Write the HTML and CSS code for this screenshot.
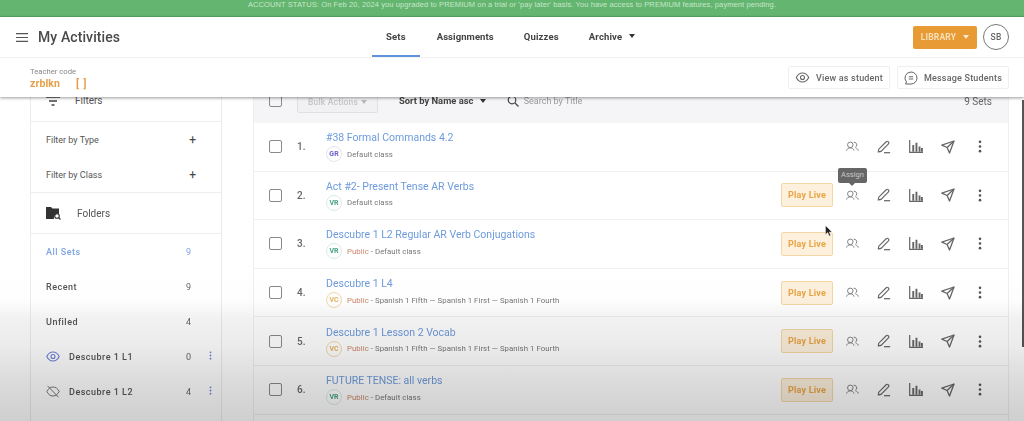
FILE: index.html
```html
<!DOCTYPE html>
<html lang="en">
<head>
<meta charset="utf-8">
<title>My Activities</title>
<link rel="stylesheet" href="styles.css">
</head>
<body>
<svg class="defs" width="0" height="0" aria-hidden="true">
  <symbol id="i-people" viewBox="0 0 14 12"><g fill="none" stroke="currentColor" stroke-width="1"><circle cx="4.6" cy="4.2" r="3"/><path d="M.6 10.5c.3-2 1.800-3 4-3s3.700 1 4 3"/><path d="M8.300 1.300a3 3 0 0 1 1.600 5.700M10.500 7.700c1.500.4 2.500 1.300 2.900 2.800"/></g></symbol>
  <symbol id="i-pencil" viewBox="0 0 16 16"><g fill="none" stroke="currentColor" stroke-width="1.300"><path d="M1.500 13.500 2 10.500 10.500 2c.7-.7 1.700-.7 2.300 0l.3.300c.6.600.6 1.600 0 2.200L4.600 13z"/><path d="M1.500 13.500 4.600 13"/></g><path d="M8 14.500h7" stroke="currentColor" stroke-width="1.400"/></symbol>
  <symbol id="i-chart" viewBox="0 0 14 13"><path d="M.7 0v12.300H14" fill="none" stroke="currentColor" stroke-width="1.200"/><path d="M3.300 5h1.900v6.800H3.300zM6.500 2.800h1.900v9H6.500zM9.600 6.500h1.900v5.300H9.600zM12 8h1.900v3.800H12z" fill="currentColor"/></symbol>
  <symbol id="i-send" viewBox="0 0 14 14"><g fill="none" stroke="currentColor" stroke-width="1.300" stroke-linejoin="round"><path d="M13 1 .8 5.200l5.300 2.300 2.400 5.500z"/><path d="M13 1 6.100 7.500"/></g></symbol>
  <symbol id="i-dots" viewBox="0 0 4 14"><circle cx="2" cy="2" r="1.400" fill="currentColor"/><circle cx="2" cy="7" r="1.400" fill="currentColor"/><circle cx="2" cy="12" r="1.400" fill="currentColor"/></symbol>
  <symbol id="i-eye" viewBox="0 0 14 11"><path d="M.8 5.500C2.200 2.600 4.400 1 7 1s4.800 1.600 6.200 4.500C11.800 8.400 9.600 10 7 10S2.200 8.400.8 5.500z" fill="none" stroke="currentColor" stroke-width="1.100"/><circle cx="7" cy="5.500" r="2" fill="none" stroke="currentColor" stroke-width="1.100"/></symbol>
</svg>

<div class="page">
  <div class="banner">ACCOUNT STATUS: On Feb 20, 2024 you upgraded to PREMIUM on a trial or 'pay later' basis. You have access to PREMIUM features, payment pending.</div>

  <header class="top">
    <div class="nav">
      <div class="brand">
        <svg class="burger" width="12" height="9" viewBox="0 0 12 9"><path d="M0 .7h12M0 4.500h12M0 8.300h12" stroke="#555" stroke-width="1.200"/></svg>
        <span class="brand-title">My Activities</span>
      </div>
      <nav class="tabs">
        <a class="tab tab-active">Sets</a>
        <a class="tab tab-assign">Assignments</a>
        <a class="tab">Quizzes</a>
        <a class="tab">Archive <span class="caret caret-dark caret-gap"></span></a>
      </nav>
      <div class="nav-right">
        <button class="library">LIBRARY <span class="caret caret-white"></span></button>
        <div class="avatar">SB</div>
      </div>
    </div>
    <div class="sub">
      <div class="code">
        <div class="code-label">Teacher code</div>
        <div class="code-value"><span>zrblkn</span><span class="code-bracket">[ ]</span></div>
      </div>
      <div class="sub-actions">
        <button class="ghost"><svg class="ghost-eye" width="15" height="11"><use href="#i-eye"/></svg>View as student</button>
        <button class="ghost ghost-msg">
          <svg width="14" height="14" viewBox="0 0 14 14"><path d="M7 1a6 6 0 0 1 0 12H1.500l1-2A6 6 0 0 1 7 1z" fill="none" stroke="#666" stroke-width="1"/><path d="M4.800 5.800h4.400M4.800 8h4.400" stroke="#666"/></svg>
          Message Students</button>
      </div>
    </div>
  </header>

  <div class="body">
    <aside class="side">
      <div class="side-head side-head-filters">
        <svg width="14" height="10" viewBox="0 0 14 10"><path d="M0 1h14M3 5h8M5.500 9h3" stroke="#444" stroke-width="1.400"/></svg>
        <span>Filters</span>
      </div>
      <div class="filters">
        <div class="filter"><span>Filter by Type</span><span class="plus">+</span></div>
        <div class="filter"><span>Filter by Class</span><span class="plus">+</span></div>
      </div>
      <div class="side-head side-head-folders">
        <svg width="15" height="14" viewBox="0 0 15 14"><path d="M0 1h5l1.500 1.500H13V8a4 4 0 0 0-5 5H0z" fill="#333"/><circle cx="11" cy="10" r="2.300" fill="none" stroke="#333" stroke-width="1.100"/><path d="m12.700 11.700 1.800 1.800" stroke="#333" stroke-width="1.100"/></svg>
        <span>Folders</span>
      </div>
      <div class="folder folder-active"><span class="folder-name">All Sets</span><span class="count">9</span></div>
      <div class="folder"><span class="folder-name">Recent</span><span class="count">9</span></div>
      <div class="folder"><span class="folder-name">Unfiled</span><span class="count">4</span></div>
      <div class="folder">
        <svg class="folder-eye eye-on" width="14" height="11"><use href="#i-eye"/></svg>
        <span class="folder-name">Descubre 1 L1</span><span class="count">0</span>
        <svg class="kebab" width="3" height="9"><use href="#i-dots"/></svg>
      </div>
      <div class="folder">
        <svg class="folder-eye eye-off" width="14" height="13" viewBox="0 0 14 13"><path d="M.8 6.500C2.200 3.600 4.400 2 7 2s4.800 1.600 6.200 4.500C11.800 9.400 9.600 11 7 11S2.200 9.400.8 6.500z" fill="none" stroke="currentColor"/><path d="m1.500 .8 11 11.400" stroke="currentColor"/></svg>
        <span class="folder-name">Descubre 1 L2</span><span class="count">4</span>
        <svg class="kebab" width="3" height="9"><use href="#i-dots"/></svg>
      </div>
    </aside>

    <main class="list">
      <div class="toolbar">
        <span class="check"></span>
        <button class="bulk">Bulk Actions <span class="caret caret-grey"></span></button>
        <span class="sort">Sort by Name asc <span class="caret caret-dark"></span></span>
        <svg class="search-icon" width="12" height="12" viewBox="0 0 12 12"><circle cx="5" cy="5" r="3.800" fill="none" stroke="#444" stroke-width="1.200"/><path d="m8 8 3.500 3.500" stroke="#444" stroke-width="1.300"/></svg>
        <span class="search">Search by Title</span>
        <span class="total">9 Sets</span>
      </div>

      <div class="row">
        <span class="check"></span><span class="num">1.</span>
        <div class="info">
          <a class="title">#38 Formal Commands 4.2</a>
          <div class="meta"><span class="badge badge-gr">GR</span><span>Default class</span></div>
        </div>
        <div class="actions">
          <svg class="a a-people"><use href="#i-people"/></svg><svg class="a a-pencil"><use href="#i-pencil"/></svg><svg class="a a-chart"><use href="#i-chart"/></svg><svg class="a a-send"><use href="#i-send"/></svg><svg class="a a-dots"><use href="#i-dots"/></svg>
        </div>
      </div>

      <div class="row">
        <span class="check"></span><span class="num">2.</span>
        <div class="info">
          <a class="title">Act #2- Present Tense AR Verbs</a>
          <div class="meta"><span class="badge badge-vr">VR</span><span>Default class</span></div>
        </div>
        <button class="play">Play Live</button>
        <div class="actions">
          <div class="tooltip">Assign</div>
          <svg class="a a-people"><use href="#i-people"/></svg><svg class="a a-pencil"><use href="#i-pencil"/></svg><svg class="a a-chart"><use href="#i-chart"/></svg><svg class="a a-send"><use href="#i-send"/></svg><svg class="a a-dots"><use href="#i-dots"/></svg>
        </div>
      </div>

      <div class="row">
        <span class="check"></span><span class="num">3.</span>
        <div class="info">
          <a class="title">Descubre 1 L2 Regular AR Verb Conjugations</a>
          <div class="meta"><span class="badge badge-vr">VR</span><span class="public">Public</span><span>- Default class</span></div>
        </div>
        <button class="play">Play Live</button>
        <div class="actions">
          <svg class="a a-people"><use href="#i-people"/></svg><svg class="a a-pencil"><use href="#i-pencil"/></svg><svg class="a a-chart"><use href="#i-chart"/></svg><svg class="a a-send"><use href="#i-send"/></svg><svg class="a a-dots"><use href="#i-dots"/></svg>
        </div>
      </div>

      <div class="row">
        <span class="check"></span><span class="num">4.</span>
        <div class="info">
          <a class="title">Descubre 1 L4</a>
          <div class="meta"><span class="badge badge-vc">VC</span><span class="public">Public</span><span>- Spanish 1 Fifth — Spanish 1 First — Spanish 1 Fourth</span></div>
        </div>
        <button class="play">Play Live</button>
        <div class="actions">
          <svg class="a a-people"><use href="#i-people"/></svg><svg class="a a-pencil"><use href="#i-pencil"/></svg><svg class="a a-chart"><use href="#i-chart"/></svg><svg class="a a-send"><use href="#i-send"/></svg><svg class="a a-dots"><use href="#i-dots"/></svg>
        </div>
      </div>

      <div class="row">
        <span class="check"></span><span class="num">5.</span>
        <div class="info">
          <a class="title">Descubre 1 Lesson 2 Vocab</a>
          <div class="meta"><span class="badge badge-vc">VC</span><span class="public">Public</span><span>- Spanish 1 Fifth — Spanish 1 First — Spanish 1 Fourth</span></div>
        </div>
        <button class="play">Play Live</button>
        <div class="actions">
          <svg class="a a-people"><use href="#i-people"/></svg><svg class="a a-pencil"><use href="#i-pencil"/></svg><svg class="a a-chart"><use href="#i-chart"/></svg><svg class="a a-send"><use href="#i-send"/></svg><svg class="a a-dots"><use href="#i-dots"/></svg>
        </div>
      </div>

      <div class="row">
        <span class="check"></span><span class="num">6.</span>
        <div class="info">
          <a class="title">FUTURE TENSE: all verbs</a>
          <div class="meta"><span class="badge badge-vr">VR</span><span class="public">Public</span><span>- Default class</span></div>
        </div>
        <button class="play">Play Live</button>
        <div class="actions">
          <svg class="a a-people"><use href="#i-people"/></svg><svg class="a a-pencil"><use href="#i-pencil"/></svg><svg class="a a-chart"><use href="#i-chart"/></svg><svg class="a a-send"><use href="#i-send"/></svg><svg class="a a-dots"><use href="#i-dots"/></svg>
        </div>
      </div>
    </main>
  </div>

  <div class="scrollbar"></div>
  <svg class="cursor" width="8" height="12" viewBox="0 0 8 12"><path d="M.5.500v9l2.200-2 1.500 3.500 1.500-.6L4.200 7H7z" fill="#222" stroke="#fff" stroke-width=".4"/></svg>
  <div class="fade"></div>
</div>
</body>
</html>
```

FILE: styles.css
```css
* { box-sizing: border-box; }
html, body { margin: 0; padding: 0; height: 100%; background: #fff; overflow: hidden; }
body { font-family: Roboto, "Liberation Sans", sans-serif; color: #444; }
.defs { position: absolute; }
button { font-family: inherit; }

.page { position: relative; width: 1024px; height: 421px; overflow: hidden; filter: blur(.45px); display: flex; flex-direction: column; }

.banner { height: 17px; flex: none; background: #63b56f; border-bottom: 1px solid #55a862; color: #c9e6cb; font-family: "Liberation Sans", sans-serif; font-size: 7.5px; line-height: 10px; text-align: center; letter-spacing: .1px; }

.top { flex: none; position: relative; z-index: 3; background: #fff; box-shadow: 0 1px 3px rgba(0,0,0,.4); }
.nav { height: 41px; display: flex; align-items: center; border-bottom: 1px solid #f1f1f1; padding-left: 16px; }
.brand { flex: 0 0 356px; display: flex; align-items: center; gap: 10px; }
.brand-title { font-size: 14px; font-weight: 500; color: #4a4a4a; letter-spacing: .1px; }
.tabs { display: flex; align-self: stretch; gap: 2px; }
.tab { display: flex; align-items: center; padding: 0 14px; font-size: 9.500px; font-weight: 700; color: #444; letter-spacing: .15px; border-bottom: 2px solid transparent; white-space: pre; }
.tab-assign { padding: 0 14px 0 15px; letter-spacing: .08px; }
.tab-active { border-bottom-color: #5f93dc; }
.nav-right { margin-left: auto; display: flex; align-items: center; gap: 6px; padding-right: 15px; }
.library { width: 64px; height: 23px; border: 0; border-radius: 2px; background: #e89b34; color: #f8dfb8; font-size: 8.500px; font-weight: 700; letter-spacing: .2px; display: flex; align-items: center; justify-content: center; gap: 7px; padding: 0; }
.avatar { width: 26px; height: 26px; border-radius: 50%; border: 1px solid #777; display: flex; align-items: center; justify-content: center; font-size: 8.500px; font-weight: 500; color: #666; letter-spacing: .3px; }

.caret { display: inline-block; width: 0; height: 0; border-left: 3.500px solid transparent; border-right: 3.500px solid transparent; border-top: 4px solid #333; }
.caret-gap { margin-left: 4px; }
.caret-dark { border-top-color: #333; }
.caret-white { border-top-color: #fbe9cd; }
.caret-grey { border-top-color: #b8b8b8; margin-left: 3px; }

.sub { height: 39px; display: flex; align-items: center; padding: 0 15px 0 30px; justify-content: space-between; }
.code { padding-top: 2px; }
.code-label { font-size: 7.700px; color: #888; line-height: 10px; }
.code-value { font-size: 10.500px; font-weight: 700; color: #e5a04a; line-height: 13px; display: flex; gap: 16px; letter-spacing: .1px; }
.code-bracket { letter-spacing: 1px; }
.sub-actions { display: flex; gap: 7px; }
.ghost { height: 23px; width: 102px; background: #fff; border: 1px solid #efefef; border-radius: 2px; display: flex; align-items: center; justify-content: center; gap: 6px; font-size: 9px; font-weight: 500; color: #666; letter-spacing: .2px; padding: 0; }
.ghost-msg { width: 112px; }
.ghost-eye { color: #666; }

.body { flex: 1; min-height: 0; display: flex; gap: 31px; padding: 0 15px 0 30px; }

.side { flex: 0 0 192px; margin-top: -10px; border-left: 1px solid #ececec; border-right: 1px solid #ececec; background: #fff; }
.side-head { display: flex; align-items: center; padding-left: 15px; font-size: 10px; color: #555; border-bottom: 1px solid #eee; }
.side-head-filters { height: 35px; padding-bottom: 7px; gap: 15px; }
.side-head-folders { height: 41px; gap: 16px; }
.filters { height: 71px; display: flex; flex-direction: column; justify-content: center; border-bottom: 1px solid #eee; padding: 0 25px 0 15px; }
.filter { height: 35px; display: flex; justify-content: space-between; align-items: center; font-size: 9px; color: #555; }
.plus { font-size: 12px; color: #444; }
.folder { height: 35px; display: flex; align-items: center; padding-left: 15px; font-size: 9px; font-weight: 500; letter-spacing: .5px; color: #555; position: relative; }
.folder-name { flex: 1; }
.count { width: 10px; margin-right: 25px; font-weight: 400; color: #666; }
.folder-active, .folder-active .count { color: #7fa5e2; }
.folder-eye { margin-right: 9px; flex: none; }
.eye-on { color: #6f7fd6; }
.eye-off { color: #777; }
.kebab { position: absolute; right: 9px; top: 12px; color: #6f7fd6; }

.list { flex: 1; margin-top: -10px; border-left: 1px solid #efefef; border-right: 1px solid #efefef; min-width: 0; }
.toolbar { height: 36px; background: #f5f5f7; display: flex; align-items: flex-start; padding: 4px 16px 0 15px; font-size: 9.500px; }
.toolbar .check { margin-top: 3px; background: #f5f5f7; }
.bulk { margin-left: 15px; margin-top: -8px; width: 81px; height: 30px; padding: 8px 0 0; background: #f1f1f3; border: 1px solid #e0e0e2; border-radius: 2px; color: #c4c4c6; font-size: 8.500px; font-weight: 500; letter-spacing: .2px; display: flex; align-items: center; justify-content: center; }
.sort { margin-left: 21px; margin-top: 4px; font-size: 9.400px; font-weight: 700; color: #444; white-space: pre; display: flex; align-items: center; gap: 4px; }
.search-icon { margin-left: 21px; margin-top: 4px; }
.search { margin-left: 5px; margin-top: 5px; font-size: 9px; color: #9a9a9a; }
.total { margin-left: auto; margin-top: 5px; font-size: 10px; color: #666; }

.check { width: 13px; height: 13px; flex: none; border: 1.500px solid #8a8a8a; border-radius: 2px; background: #fff; }

.row { height: 48.600px; display: flex; align-items: center; padding: 0 15px; border-bottom: 1px solid #f0f0f0; background: #fff; }
.num { width: 29px; flex: none; padding-left: 15px; font-size: 10px; font-weight: 500; color: #666; box-sizing: content-box; }
.info { flex: 1; min-width: 0; }
.title { display: block; font-size: 10.500px; line-height: 14px; color: #6d9bdc; white-space: nowrap; }
.meta { display: flex; align-items: center; gap: 4px; margin-top: 1px; font-size: 7.800px; color: #777; white-space: nowrap; letter-spacing: .05px; }
.public { color: #c98466; margin-right: -2px; }
.badge { width: 16px; height: 16px; border-radius: 50%; border: 1px solid #e4e4ee; display: flex; align-items: center; justify-content: center; font-size: 7px; font-weight: 700; margin-right: 1px; }
.badge-gr { color: #6a63c9; }
.badge-vr { color: #4aa38a; border-color: #d8ece6; }
.badge-vc { color: #e5b35c; border-color: #f1d9a8; }

.play { width: 52px; height: 24px; flex: none; background: #fdf0dc; border: 1px solid #f5d7a6; border-radius: 2px; color: #e9a545; font-size: 9px; font-weight: 700; letter-spacing: .2px; padding: 0; margin-right: 11px; }

.actions { flex: none; width: 145px; display: flex; align-items: center; position: relative; color: #666; margin-right: 4px; }
.a { flex: none; display: block; color: #666; }
.a-people { width: 13px; height: 11px; margin-left: 2px; color: #777; }
.a-pencil { width: 14px; height: 14px; margin-left: 18px; }
.a-chart { width: 14px; height: 13px; margin-left: 18px; }
.a-send { width: 14px; height: 14px; margin-left: 18px; }
.a-dots { width: 4px; height: 13px; margin-left: 23px; color: #555; }

.tooltip { position: absolute; left: -6px; top: -20px; width: 29px; height: 15px; background: #666; color: #c8c8c8; font-size: 7.500px; line-height: 14px; text-align: center; border-radius: 2px; }
.tooltip::after { content: ""; position: absolute; left: 11px; bottom: -3px; border-left: 3px solid transparent; border-right: 3px solid transparent; border-top: 3px solid #666; }

.scrollbar { position: absolute; z-index: 2; right: 0; top: 100px; width: 2px; height: 247px; background: #555; }
.cursor { position: absolute; z-index: 4; left: 825px; top: 225px; }
.fade { position: absolute; z-index: 5; left: 0; right: 0; bottom: 0; height: 150px; pointer-events: none; mix-blend-mode: multiply; background: linear-gradient(to bottom, #fff 0, #fdfdfd 20%, #f1f1f1 32%, #ebebeb 50%, #dddddd 70%, #d4d4d4 88%, #cfcfcf 100%); }
```
